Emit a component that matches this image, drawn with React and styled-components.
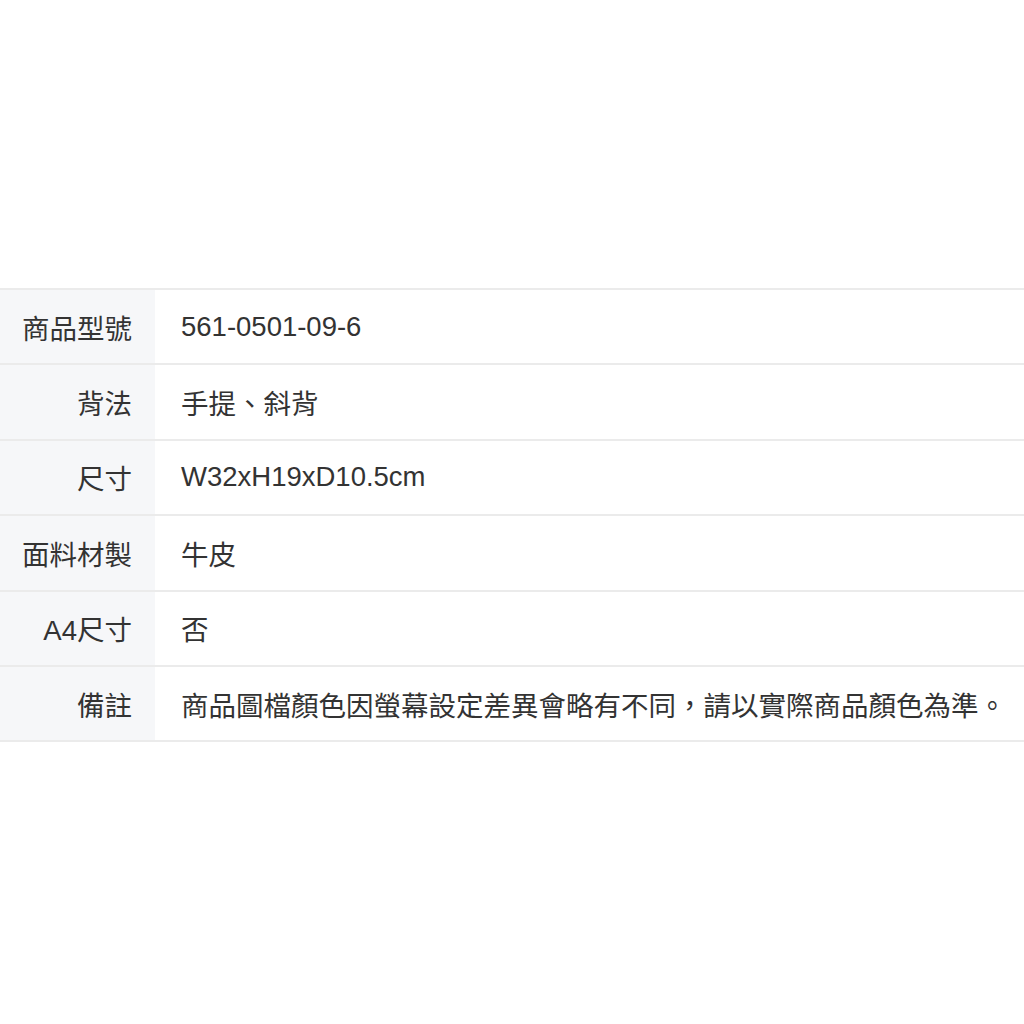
import React from "react";
import styled, { createGlobalStyle } from "styled-components";

const Global = createGlobalStyle`
  html, body { margin: 0; padding: 0; background: #ffffff; }
  body { font-family: "Liberation Sans", "Noto Sans CJK TC", sans-serif; }
`;

const Page = styled.div`
  width: 1024px;
  height: 1024px;
  padding-top: 288px;
  box-sizing: border-box;
  overflow: hidden;
`;

const Table = styled.div`
  display: flex;
  flex-direction: column;
  border-top: 2px solid #ebebeb;
`;

const Row = styled.div`
  display: grid;
  grid-template-columns: 155px 1fr;
  height: 75.4px;
  border-bottom: 2px solid #ebebeb;
  box-sizing: border-box;
  height: 75.4px;
`;

const Label = styled.div`
  background: #f6f7f9;
  display: flex;
  align-items: center;
  justify-content: flex-end;
  padding-right: 23px;
  font-size: 27.5px;
  color: #333333;
  white-space: nowrap;
`;

const Value = styled.div`
  display: flex;
  align-items: center;
  padding-left: 26px;
  font-size: 27.5px;
  color: #333333;
  white-space: nowrap;
`;

const rows = [
  ["商品型號", "561-0501-09-6"],
  ["背法", "手提、斜背"],
  ["尺寸", "W32xH19xD10.5cm"],
  ["面料材製", "牛皮"],
  ["A4尺寸", "否"],
  ["備註", "商品圖檔顏色因螢幕設定差異會略有不同，請以實際商品顏色為準。"],
];

export default function App() {
  return (
    <Page>
      <Global />
      <Table>
        {rows.map(([k, v]) => (
          <Row key={k}>
            <Label>{k}</Label>
            <Value>{v}</Value>
          </Row>
        ))}
      </Table>
    </Page>
  );
}
